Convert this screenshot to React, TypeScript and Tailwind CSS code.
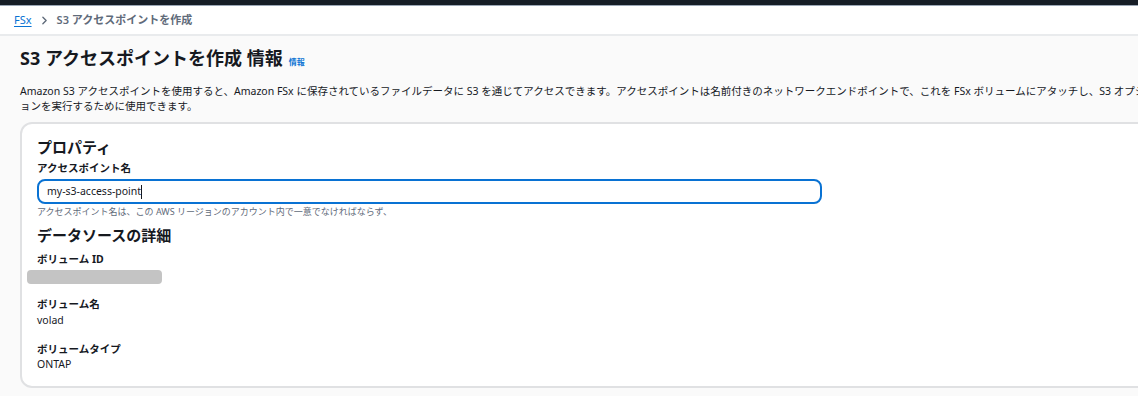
import { ChevronRight } from "lucide-react";

const font = "font-['Noto_Sans','Noto_Sans_CJK_JP',sans-serif]";

export default function App() {
    return (
        <div className={`w-[1138px] h-[396px] overflow-hidden bg-[#fafafa] text-[#16191f] ${font}`}>
            <div className="h-[5px] bg-[#161d26]" />
            <div className="h-[1px] bg-[#9ba7b6]" />
            {/* breadcrumb */}
            <div className="h-[30px] bg-white border-b-2 border-[#e9ebed] flex items-center px-[14px] text-[11px]">
                <span className="text-[#0972d3] underline underline-offset-2">FSx</span>
                <ChevronRight className="w-[13px] h-[13px] mx-[6px] text-[#5f6b7a]" strokeWidth={2.5} />
                <span className="text-[#5f6b7a] font-semibold">S3 アクセスポイントを作成</span>
            </div>

            <div className="pl-[20px] w-[1300px]">
                <div className="flex items-baseline gap-[6px] mt-[9px] h-[26px]">
                    <h1 className="text-[18px] font-bold leading-[26px]">S3 アクセスポイントを作成 情報</h1>
                    <span className="text-[8px] font-bold text-[#0972d3]">情報</span>
                </div>
                <p className="mt-[13px] text-[10.5px] leading-[15px] text-[#16191f]">
                    <span className="block whitespace-nowrap">
                        Amazon S3 アクセスポイントを使用すると、Amazon FSx に保存されているファイルデータに S3 を通じてアクセスできます。アクセスポイントは名前付きのネットワークエンドポイントで、これを FSx ボリュームにアタッチし、S3 オプシ
                    </span>
                    <span className="block whitespace-nowrap">ョンを実行するために使用できます。</span>
                </p>

                {/* card */}
                <div className="mt-[8px] h-[266px] bg-white border-2 border-[#e0e1e3] rounded-[12px] pl-[15px] pt-[13px]">
                    <h2 className="text-[15px] font-bold leading-[20px]">プロパティ</h2>
                    <div className="mt-[3px] text-[10.5px] font-bold leading-[16px]">アクセスポイント名</div>
                    <div className="mt-[3px] w-[785px] h-[25px] border-2 border-[#0972d3] rounded-[8px] bg-white flex items-center pl-[8px] text-[10.5px]">
                        my-s3-access-point<span className="w-[1px] h-[14px] bg-[#16191f]" />
                    </div>
                    <div className="mt-[1px] text-[9px] leading-[14px] text-[#5f6b7a]">
                        アクセスポイント名は、この AWS リージョンのアカウント内で一意でなければならず、
                    </div>
                    <h2 className="mt-[6px] text-[15px] font-bold leading-[20px]">データソースの詳細</h2>

                    <div className="mt-[7px] text-[10.5px] font-bold leading-[14px]">ボリューム ID</div>
                    <div className="mt-[4px] -ml-[10px] w-[135px] h-[14px] rounded-[4px] bg-[#c4c4c4]" />

                    <div className="mt-[13px] text-[10.5px] font-bold leading-[14px]">ボリューム名</div>
                    <div className="mt-[2px] text-[10.5px] leading-[14px]">volad</div>

                    <div className="mt-[15px] text-[10.5px] font-bold leading-[14px]">ボリュームタイプ</div>
                    <div className="mt-[1px] text-[10.5px] leading-[14px]">ONTAP</div>
                </div>
            </div>
        </div>
    );
}
